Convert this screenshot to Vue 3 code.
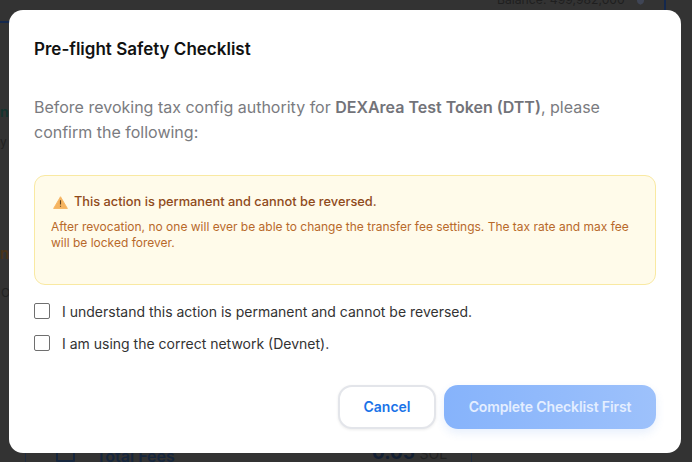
<template>
  <div class="page">
    <!-- page behind the overlay, only the edges show -->
    <div class="behind">
      <div class="top-line"></div>
      <div class="side-line"></div>
      <div class="left-rule"></div>
      <div class="right-rule"></div>
      <span class="balance">Balance: 499,982,000</span>
      <svg class="shield" viewBox="0 0 10 12" width="7" height="9">
        <path d="M5 0 10 2v4c0 3-2 5-5 6-3-1-5-3-5-6V2Z" fill="#3f4555" />
      </svg>
      <span class="side-text side-n">n</span>
      <span class="side-text side-y">y</span>
      <span class="side-text side-orange">n</span>
      <span class="side-text side-o">O</span>
      <div class="fees-icon"></div>
      <span class="fees-label">Total Fees</span>
      <span class="fees-value">0.05 <small>SOL</small></span>
    </div>

    <div class="overlay">
      <div class="modal">
        <h2 class="modal-title">Pre-flight Safety Checklist</h2>
        <p class="intro">
          Before revoking tax config authority for <strong>DEXArea Test Token (DTT)</strong>, please confirm the following:
        </p>

        <div class="warning">
          <div class="warning-title">
            <svg class="warning-icon" viewBox="0 0 16 14" width="15" height="13">
              <path d="M8 .8 15.4 13.4H.6Z" fill="#f5b461" stroke="#f5b461" stroke-width="1" stroke-linejoin="round" />
              <path d="M8 4.6v4.6M8 10.4v1.3" stroke="#5f4320" stroke-width="1.2" />
            </svg>
            <span>This action is permanent and cannot be reversed.</span>
          </div>
          <p class="warning-text">
            After revocation, no one will ever be able to change the transfer fee settings. The tax rate and max fee will be locked forever.
          </p>
        </div>

        <label v-for="item in checks" :key="item" class="check-row">
          <span class="check-box"></span>
          <span>{{ item }}</span>
        </label>

        <div class="actions">
          <button class="btn-cancel">Cancel</button>
          <button class="btn-complete">Complete Checklist First</button>
        </div>
      </div>
    </div>
  </div>
</template>

<script setup>
const checks = [
  'I understand this action is permanent and cannot be reversed.',
  'I am using the correct network (Devnet).'
]
</script>

<style>
html, body {
  margin: 0;
  background: #333;
}
</style>

<style scoped>
.page {
  position: relative;
  width: 692px;
  height: 462px;
  overflow: hidden;
  background: #333;
  font-family: Inter, "Liberation Sans", sans-serif;
}

.behind {
  position: absolute;
  inset: 0;
  color: #16263d;
}

.top-line {
  position: absolute;
  left: 0;
  top: 21px;
  width: 10px;
  height: 2px;
  background: #14284d;
}

.side-line {
  position: absolute;
  left: 664px;
  top: 0;
  width: 2px;
  height: 11px;
  background: #14284d;
}

.left-rule,
.right-rule {
  position: absolute;
  top: 452px;
  width: 1px;
  height: 10px;
  background: #1f2c40;
}

.left-rule {
  left: 25px;
}

.right-rule {
  left: 471px;
}

.balance {
  position: absolute;
  left: 497px;
  top: -8px;
  font-size: 12.2px;
  color: #1f1f1f;
}

.shield {
  position: absolute;
  left: 637px;
  top: -4px;
}

.side-text {
  position: absolute;
  left: 0;
  font-size: 14px;
}

.side-n {
  top: 103px;
  font-weight: 600;
  color: #12332f;
}

.side-y {
  top: 134px;
  font-size: 12px;
  color: #222;
}

.side-orange {
  top: 244px;
  left: 0;
  font-size: 15px;
  font-weight: 600;
  color: #4a3418;
}

.side-o {
  top: 285px;
  left: 1px;
  font-size: 12px;
  color: #222;
}

.fees-icon {
  position: absolute;
  left: 56px;
  top: 452px;
  width: 15px;
  height: 8px;
  border: 2px solid #16263d;
  border-top: 0;
  border-radius: 2px;
}

.fees-label {
  position: absolute;
  left: 96px;
  top: 446px;
  font-size: 16px;
  font-weight: 600;
}

.fees-value {
  position: absolute;
  left: 372px;
  top: 441px;
  font-size: 19px;
  font-weight: 700;
  color: #132033;
}

.fees-value small {
  font-size: 14px;
  font-weight: 400;
  color: #222;
}

.overlay {
  position: absolute;
  inset: 0;
  padding: 10px 11px 9px 9px;
  box-sizing: border-box;
}

.modal {
  height: 100%;
  box-sizing: border-box;
  padding: 28px 25px 24px;
  background: #fff;
  border-radius: 14px;
  display: flex;
  flex-direction: column;
}

.modal-title {
  margin: 0;
  font-size: 17px;
  line-height: 22px;
  font-weight: 600;
  color: #111;
}

.intro {
  margin: 35px 0 0;
  font-size: 16px;
  line-height: 25px;
  color: #7a7b80;
}

.intro strong {
  font-weight: 600;
  color: #727379;
}

.warning {
  margin-top: 30px;
  height: 110px;
  box-sizing: border-box;
  padding: 17px 16px;
  background: #fffbea;
  border: 1px solid #f9e9a2;
  border-radius: 11px;
}

.warning-title {
  display: flex;
  align-items: center;
  gap: 6px;
  padding-left: 2px;
  font-size: 12.8px;
  line-height: 18px;
  font-weight: 500;
  color: #8f4a1a;
}

.warning-text {
  margin: 8px 0 0;
  font-size: 12px;
  line-height: 16px;
  color: #b8692a;
}

.check-row {
  display: flex;
  align-items: center;
  gap: 12px;
  margin-top: 10px;
  height: 22px;
  font-size: 14px;
  color: #333;
}

.warning + .check-row {
  margin-top: 15px;
}

.check-box {
  width: 14px;
  height: 14px;
  border: 1px solid #6f6f6f;
  border-radius: 2px;
  background: #fff;
}

.actions {
  margin-top: auto;
  display: flex;
  justify-content: flex-end;
  gap: 8px;
}

.actions button {
  height: 44px;
  padding: 0 0 2px;
  font-family: inherit;
  font-size: 14px;
  font-weight: 600;
  border-radius: 14px;
}

.btn-cancel {
  width: 98px;
  background: #fff;
  border: 2px solid #e3e5ea;
  color: #1a73e8;
  box-shadow: 0 1px 3px rgba(0, 0, 0, 0.08);
}

.btn-complete {
  width: 212px;
  border: 0;
  color: #e4eeff;
  letter-spacing: -0.12px;
  background: linear-gradient(90deg, #86b3fb, #9dc1fb);
  box-shadow: 0 4px 10px rgba(60, 120, 230, 0.12);
}
</style>
